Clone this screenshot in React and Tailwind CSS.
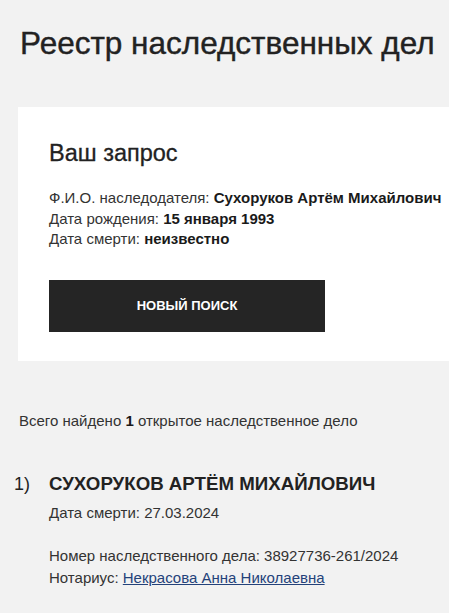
export default function App() {
  return (
    <div
      className="min-h-screen w-full overflow-hidden bg-[#f2f2f2] text-[#222222]"
      style={{ fontFamily: '"Liberation Sans", Arial, sans-serif' }}
    >
      <h1 className="pl-5 pt-[24px] text-[31.5px] leading-[38px] font-normal [-webkit-text-stroke:0.4px_#222222]">
        Реестр наследственных дел
      </h1>

      <div className="ml-[18px] mt-[45px] w-[460px] bg-white pl-[31px] pt-[31px] pb-[29px]">
        <h2 className="text-[23.5px] leading-[30px] font-normal [-webkit-text-stroke:0.3px_#222222]">
          Ваш запрос
        </h2>
        <div className="mt-[20px] text-[15px] leading-[20.5px] text-[#333333]">
          <p>
            Ф.И.О. наследодателя: <b className="text-[#1a1a1a]">Сухоруков Артём Михайлович</b>
          </p>
          <p>
            Дата рождения: <b className="text-[#1a1a1a]">15 января 1993</b>
          </p>
          <p>
            Дата смерти: <b className="text-[#1a1a1a]">неизвестно</b>
          </p>
        </div>
        <button className="mt-[30px] flex h-[52px] w-[276px] items-center justify-center bg-[#252525] text-[13px] font-bold uppercase text-white">
          Новый поиск
        </button>
      </div>

      <p className="mt-[50px] pl-[19px] text-[15px] leading-[20px] text-[#333333]">
        Всего найдено <b className="text-[#1a1a1a]">1</b> открытое наследственное дело
      </p>

      <div className="mt-[41px] flex">
        <div className="w-[49px] pl-[14px] text-[18px] leading-[24px]">1)</div>
        <div>
          <div className="text-[18.7px] leading-[24px] font-bold uppercase">
            Сухоруков Артём Михайлович
          </div>
          <p className="mt-[7px] text-[15px] leading-[20px] text-[#333333]">
            Дата смерти: 27.03.2024
          </p>
          <div className="mt-[22px] text-[15px] leading-[22px] text-[#333333]">
            <p>Номер наследственного дела: 38927736-261/2024</p>
            <p>
              Нотариус:{" "}
              <a href="#" className="text-[#24427a] underline">
                Некрасова Анна Николаевна
              </a>
            </p>
          </div>
        </div>
      </div>
    </div>
  );
}
